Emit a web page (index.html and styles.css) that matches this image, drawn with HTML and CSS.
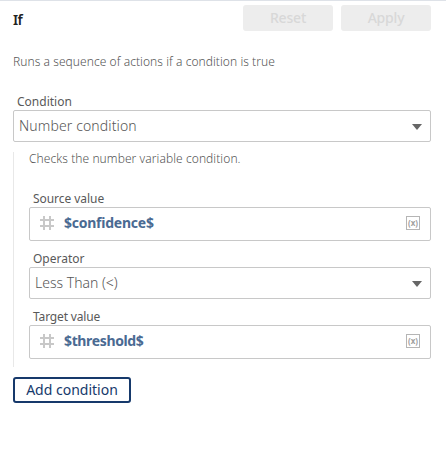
FILE: index.html
```html
<!DOCTYPE html>
<html lang="en">
<head>
<meta charset="utf-8">
<title>If</title>
<link rel="stylesheet" href="styles.css">
</head>
<body>
<main class="panel">
  <header class="header">
    <h1 class="title">If</h1>
    <div class="actions">
      <button class="btn" disabled>Reset</button>
      <button class="btn" disabled>Apply</button>
    </div>
  </header>
  <p class="desc">Runs a sequence of actions if a condition is true</p>
  <div class="label t-cond">Condition</div>
  <div class="select"><span class="t-number">Number condition</span><i class="caret"></i></div>
  <section class="group">
    <p class="hint">Checks the number variable condition.</p>
    <div class="label t-source">Source value</div>
    <div class="input">
      <svg class="hash" width="14" height="14" viewBox="0 0 14 14"><path d="M4 0v14M10 0v14M0 4h14M0 10h14"/></svg>
      <span class="value t-conf">$confidence$</span>
      <span class="var">(x)</span>
    </div>
    <div class="label t-operator">Operator</div>
    <div class="select"><span>Less Than (&lt;)</span><i class="caret"></i></div>
    <div class="label t-target">Target value</div>
    <div class="input">
      <svg class="hash" width="14" height="14" viewBox="0 0 14 14"><path d="M4 0v14M10 0v14M0 4h14M0 10h14"/></svg>
      <span class="value t-thresh">$threshold$</span>
      <span class="var">(x)</span>
    </div>
  </section>
  <button class="add">Add condition</button>
</main>
</body>
</html>
```
FILE: styles.css
```css
* { box-sizing: border-box; }
body { margin: 0; background: #fff; font-family: "Noto Sans", "Open Sans", sans-serif; color: #555; }
.panel { height: 455px; border-top: 1px solid #dee2e8; padding: 4px 15px 0 13px; }
.header { display: flex; justify-content: space-between; height: 26px; }
.title { margin: 6px 0 0; font-size: 14px; line-height: 18px; font-weight: 600; letter-spacing: -0.8px; color: #222; }
.actions { display: flex; gap: 8px; }
.btn { width: 90px; height: 26px; border: 0; border-radius: 3px; padding: 0; background: #ededed; color: #d8d8d8; font: 500 14px/26px "Noto Sans", sans-serif; letter-spacing: -0.2px; }
.desc { margin: 22px 0 0; font-size: 12px; line-height: 18px; font-weight: 300; letter-spacing: 0.06px; white-space: nowrap; }
.label { padding-left: 4px; font-size: 12px; line-height: 16px; height: 16px; color: #595959; }
.t-cond { margin-top: 23px; }
.t-source { letter-spacing: -0.05px; }
.t-target { letter-spacing: -0.15px; }
.select, .input { display: flex; align-items: center; border: 1px solid #c8c8c8; border-radius: 2px; white-space: nowrap; }
.select { height: 32px; padding: 0 8px 2px 5px; font-size: 14px; font-weight: 300; justify-content: space-between; }
.t-number { letter-spacing: 0.12px; }
.caret { border: 5px solid transparent; border-top: 6px solid #666; border-bottom: 0; margin-top: 3px; }
.input { height: 34px; padding: 0 10px; }
.hash { fill: none; stroke: #c8c8c8; stroke-width: 2; margin-top: -3px; }
.value { margin: -2px auto 0 10px; font-size: 14px; line-height: 20px; font-weight: 700; color: #4a6a92; }
.t-conf { letter-spacing: -0.24px; }
.t-thresh { letter-spacing: -0.36px; }
.var { width: 14px; height: 14px; margin-top: -2px; border: 1px solid #b5b5b5; font-size: 8px; line-height: 11px; font-weight: 700; color: #a0a0a0; text-align: center; }
.group { margin-top: 10px; height: 215px; border-left: 1px solid #e8e8e8; padding-left: 15px; }
.hint { margin: 0; height: 16px; font-size: 12px; line-height: 14px; font-weight: 300; letter-spacing: 0.07px; }
.t-source { margin-top: 23px; }
.t-operator { margin-top: 10px; }
.t-target { margin-top: 10px; }
.add { display: block; margin-top: 10px; width: 118px; height: 26px; border: 2px solid #16396b; border-radius: 3px; padding: 0; background: #fff; color: #16396b; font: 400 14px/22px "Noto Sans", sans-serif; white-space: nowrap; }
```
